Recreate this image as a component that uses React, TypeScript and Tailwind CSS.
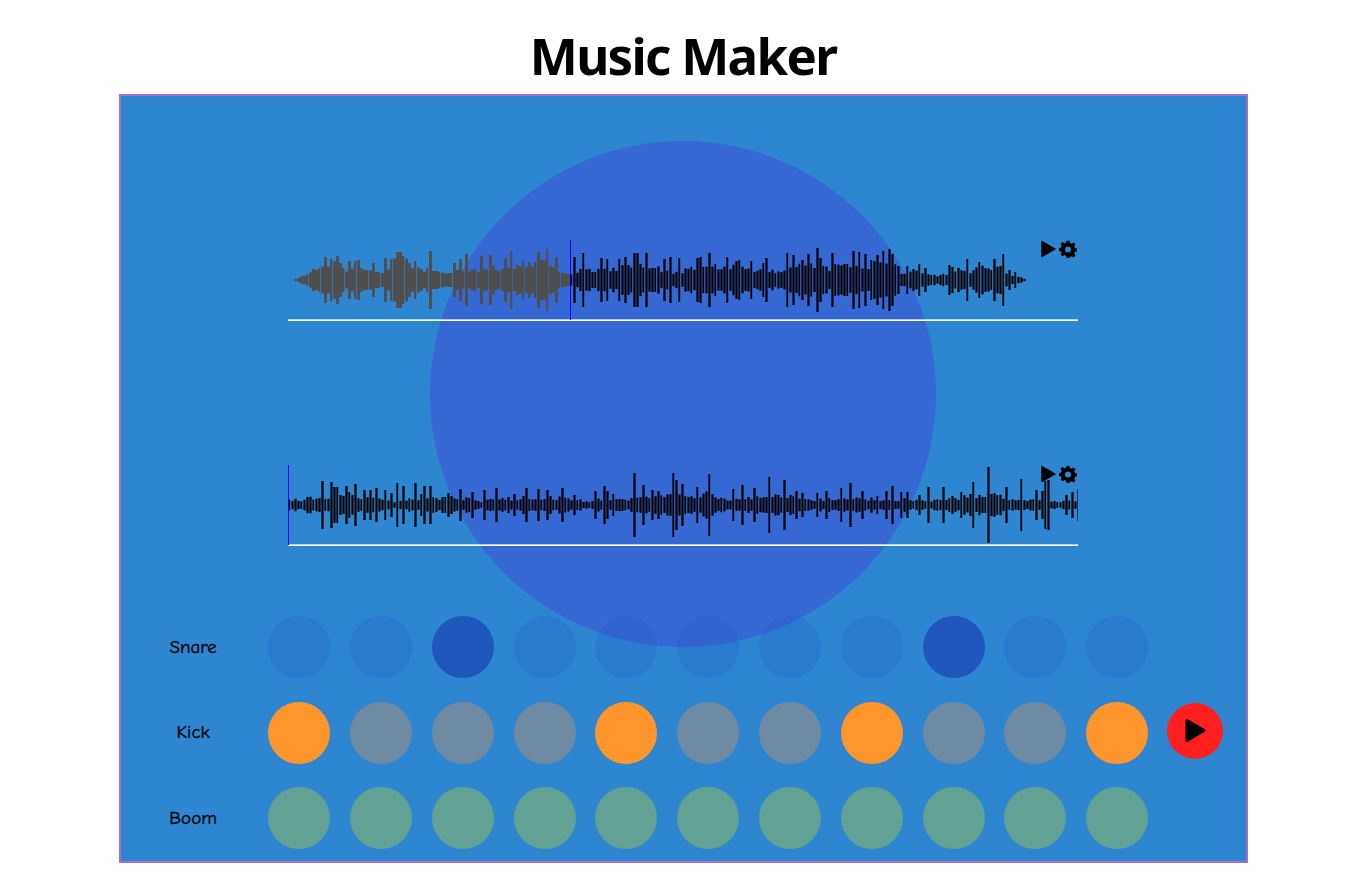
import React from "react";

type P = [number, number];

const env1: P[] = [[295,1],[300,2],[305,6],[310,9],[320,9],[325,14],[340,16],[345,10],[355,14],[362,8],[375,7],[385,8],[395,17],[405,17],[415,12],[425,9],[440,7],[450,6],[455,12],[465,10],[480,8],[490,14],[500,10],[510,14],[520,12],[540,16],[555,10],[566,5],[575,6],[582,11],[590,9],[600,11],[612,10],[625,13],[640,12],[652,14],[662,9],[672,6],[690,10],[705,14],[720,9],[735,13],[750,9],[765,12],[775,6],[790,14],[810,13],[825,10],[845,15],[860,11],[880,17],[892,20],[900,6],[915,8],[925,7],[935,4],[945,5],[955,10],[965,7],[985,12],[1000,12],[1010,4],[1018,3],[1025,1]];
const spikes1: P[] = [[325,23],[330,20],[332,21],[336,24],[341,17],[350,19],[354,19],[359,20],[363,10],[372,17],[386,22],[390,21],[397,28],[399,28],[404,24],[408,17],[415,19],[421,11],[429,29],[433,9],[454,17],[459,21],[467,26],[482,24],[489,25],[505,22],[510,29],[522,19],[534,18],[539,28],[548,31],[557,23],[573,23],[582,27],[602,22],[608,21],[618,21],[625,23],[633,27],[636,27],[647,27],[663,21],[669,23],[678,22],[696,22],[699,23],[708,27],[715,16],[726,23],[735,19],[738,20],[750,19],[762,17],[766,22],[786,27],[793,25],[802,20],[809,26],[816,32],[820,22],[833,27],[852,29],[858,28],[865,26],[872,20],[877,25],[882,29],[889,31],[897,14],[906,14],[912,11],[919,16],[926,12],[948,15],[953,13],[968,21],[980,18],[993,21],[1003,26],[1008,10],[1016,8]];
const env2: P[] = [[288,6],[300,6],[315,9],[345,11],[380,7],[395,4],[410,7],[430,9],[445,8],[460,9],[480,4],[495,6],[520,8],[560,8],[585,4],[610,8],[640,7],[660,10],[680,11],[710,12],[730,5],[760,10],[790,9],[810,5],[830,8],[860,8],[885,5],[905,6],[925,4],[950,8],[975,10],[990,13],[1005,7],[1030,7],[1055,4],[1078,7]];
const spikes2: P[] = [[323,24],[330,23],[334,18],[338,18],[345,19],[350,13],[354,21],[363,15],[370,15],[375,17],[384,15],[390,12],[397,22],[404,19],[415,22],[420,11],[424,19],[431,19],[447,12],[460,16],[472,13],[483,15],[496,17],[513,11],[525,17],[537,16],[548,15],[562,17],[575,10],[595,14],[604,19],[608,14],[613,11],[633,32],[642,20],[651,15],[657,14],[672,32],[675,25],[683,21],[696,18],[710,31],[732,16],[743,20],[754,17],[768,28],[784,25],[795,14],[802,12],[817,12],[825,14],[840,17],[849,22],[863,14],[878,9],[887,14],[892,19],[902,13],[908,13],[919,10],[928,18],[943,18],[961,13],[973,23],[989,38],[1007,18],[1022,26],[1036,15],[1041,14],[1045,24],[1048,25],[1065,10],[1073,13],[1077,16]];

function lerp(pts: P[], x: number) {
  for (let i = 1; i < pts.length; i++) {
    if (x <= pts[i][0]) {
      const [a, b] = pts[i - 1];
      const [c, d] = pts[i];
      return b + ((d - b) * (x - a)) / (c - a);
    }
  }
  return pts[pts.length - 1][1];
}

function bars(env: P[], spikes: P[], start: number, end: number, seed: number, low: number, span: number) {
  const pitch = 3;
  const out: { x: number; a: number }[] = [];
  let s = seed;
  for (let x = start; x <= end; x += pitch) {
    s = (s * 16807) % 2147483647;
    const r = s / 2147483647;
    let a = lerp(env, x) * (low + span * r);
    for (const [sx, sa] of spikes) {
      if (Math.abs(sx - x) <= pitch / 2) a = Math.max(a, sa);
    }
    out.push({ x: x - 288, a: Math.max(a, 0.8) });
  }
  return out;
}

function Waveform({ data, progress }: { data: { x: number; a: number }[]; progress: number }) {
  return (
    <svg width="790" height="80" viewBox="0 0 790 80" className="block">
      {data.map((b, i) => {
        const played = b.x < progress;
        return (
          <g key={i}>
            <rect x={b.x - 1} y={40 - b.a} width={i % 4 === 0 ? 2.3 : 3} height={b.a * 2} fill={played ? "#4f4f4f" : "#000"} fillOpacity={played ? 1 : 0.6} />
            {!played && <rect x={b.x} y={40 - b.a} width={1} height={b.a * 2} fill="#000" />}
          </g>
        );
      })}
    </svg>
  );
}

function Track({ data, progress }: { data: { x: number; a: number }[]; progress: number }) {
  return (
    <div className="relative h-[81px] w-[790px] border-b border-white shadow-[inset_0_-1px_0_rgba(255,255,255,0.65)]">
      <Waveform data={data} progress={progress} />
      <div className="absolute top-0 bottom-0 w-px bg-[#0000ff]" style={{ left: progress }} />
      <div className="absolute right-0 top-0 flex items-center gap-[3px] pr-px">
        <svg width="15" height="18" viewBox="0 0 15 18">
          <path d="M1 1.5 L14 9 L1 16.5 Z" fill="#000" stroke="#000" strokeWidth="1.4" strokeLinejoin="round" />
        </svg>
        <svg width="18" height="18" viewBox="0 0 24 24" fill="#000">
          <path fillRule="evenodd" d="M10 1h4l.6 3.1c.7.2 1.4.5 2 .9l2.7-1.8 2.8 2.8-1.8 2.7c.4.6.7 1.3.9 2l3.1.6v4l-3.1.6c-.2.7-.5 1.4-.9 2l1.8 2.7-2.8 2.8-2.7-1.8c-.6.4-1.3.7-2 .9L14 24h-4l-.6-3.1c-.7-.2-1.4-.5-2-.9l-2.7 1.8-2.8-2.8L3.7 17.3c-.4-.6-.7-1.3-.9-2L-.3 14.7v-4l3.1-.6c.2-.7.5-1.4.9-2L1.9 5.4l2.8-2.8 2.7 1.8c.6-.4 1.3-.7 2-.9L10 1zm2 7.5a4 4 0 100 8 4 4 0 000-8z" />
        </svg>
      </div>
    </div>
  );
}

const wave1 = bars(env1, spikes1, 295, 1025, 12345, 0.8, 0.55);
const wave2 = bars(env2, spikes2, 289, 1078, 67891, 0.55, 0.6);

const snareOn = [2, 8];
const kickOn = [0, 4, 7, 10];
const steps = Array.from({ length: 11 }, (_, i) => i);

function Row({ label, dot, children }: { label: string; dot: (i: number) => string; children?: React.ReactNode }) {
  return (
    <div className="flex h-[62px] items-center">
      <div className="w-[147.3px] pr-[3px] text-center text-[19px] text-black [-webkit-text-stroke:0.35px_black]" style={{ fontFamily: '"Comic Sans MS", "Comic Neue", cursive' }}>{label}</div>
      <div className="flex w-[880px] justify-between">
        {steps.map((i) => (
          <div key={i} className={`h-[62px] w-[62px] rounded-full ${dot(i)}`} />
        ))}
      </div>
      {children}
    </div>
  );
}

export default function App() {
  return (
    <div className="min-h-[891px] bg-white" style={{ fontFamily: '"Noto Sans", sans-serif' }}>
      <h1 className="ml-[119px] flex h-[94px] w-[1129px] items-center justify-center pr-px pt-[17px] text-[51px] font-bold leading-none tracking-[-1.7px] text-black">Music Maker</h1>
      <div className="relative ml-[119px] flex h-[769px] w-[1129px] flex-col border-2 border-[#a56cd6] bg-[#2e86d1] pt-[144px]">
        <div className="absolute left-[309px] top-[45px] h-[506px] w-[506px] rounded-full bg-[#3668d3]" />
        <div className="relative ml-[167px] flex flex-col gap-[144px]">
          <Track data={wave1} progress={282} />
          <Track data={wave2} progress={0} />
        </div>
        <div className="relative mt-[70px] flex w-full flex-col gap-[23.5px]">
          <Row label="Snare" dot={(i) => (snareOn.includes(i) ? "bg-[#1f57bd]" : "bg-[#1e50be]/20")} />
          <Row label="Kick" dot={(i) => (kickOn.includes(i) ? "bg-[#ff962d]" : "bg-[#6f8ba4]")}>
            <div className="mb-[4px] ml-[19px] flex h-[56px] w-[56px] items-center justify-center rounded-full bg-[#ff1f1f]">
              <svg width="21" height="25" viewBox="0 0 21 25">
                <path d="M2 2.5 L19 12.5 L2 22.5 Z" fill="#000" stroke="#000" strokeWidth="3" strokeLinejoin="round" />
              </svg>
            </div>
          </Row>
          <Row label="Boom" dot={() => "bg-[#62a294]"} />
        </div>
      </div>
    </div>
  );
}
